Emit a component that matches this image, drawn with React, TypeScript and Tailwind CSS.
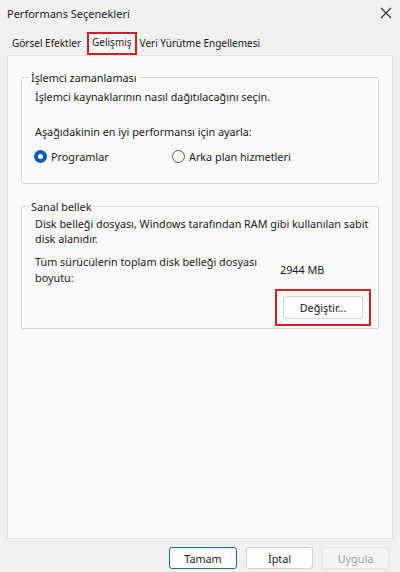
import React from "react";

const font = { fontFamily: '"Noto Sans", "Open Sans", sans-serif' };

const Radio = ({ checked, label }: { checked?: boolean; label: string }) => (
  <div className="flex items-center gap-[4px]">
    {checked ? (
      <span className="w-[13px] h-[13px] rounded-full bg-[#0a5bb5] flex items-center justify-center">
        <span className="w-[5px] h-[5px] rounded-full bg-white" />
      </span>
    ) : (
      <span className="w-[13px] h-[13px] rounded-full border border-[#5c5c5c] bg-[#f7f7f7]" />
    )}
    <span>{label}</span>
  </div>
);

const Group = ({ title, children }: { title: string; children: React.ReactNode }) => (
  <fieldset className="border border-[#dcdcdc] rounded-[2px] mx-[13px] pl-[12px] pr-[5px]">
    <legend className="px-[2px] ml-[-5px] text-[#1a1a1a]">{title}</legend>
    {children}
  </fieldset>
);

export default function App() {
  return (
    <div
      className="w-[400px] h-[572px] bg-[#f0f0f0] text-[10.8px] leading-[15px] text-[#1a1a1a] flex flex-col overflow-hidden"
      style={font}
    >
      <div className="flex items-center justify-between h-[26px] pl-[7px] pr-[8px]">
        <span className="text-[11px]">Performans Seçenekleri</span>
        <svg width="12" height="12" viewBox="0 0 12 12" className="text-[#333]">
          <path d="M1 1L11 11M11 1L1 11" stroke="currentColor" strokeWidth="1.1" />
        </svg>
      </div>

      <div className="flex items-end h-[29px] pl-[12px] text-[10px]">
        <span className="pb-[4px] pr-[5px]">Görsel Efektler</span>
        <span className="h-[23px] px-[3px] ml-[1px] border-2 border-[#d11f2a] bg-[#f9f9f9] flex items-center pb-[2px]">
          Gelişmiş
        </span>
        <span className="pb-[4px] pl-[3px]">Veri Yürütme Engellemesi</span>
      </div>

      <div className="mx-[7px] h-[484px] border border-[#e2e2e2] bg-[#f9f9f9] pt-[14px] flex flex-col gap-[15px]">
        <Group title="İşlemci zamanlaması">
          <div className="pl-[1px] pt-[4px]">İşlemci kaynaklarının nasıl dağıtılacağını seçin.</div>
          <div className="pl-[1px] pt-[20px]">Aşağıdakinin en iyi performansı için ayarla:</div>
          <div className="flex pt-[10px] pb-[19px]">
            <div className="w-[138px]">
              <Radio checked label="Programlar" />
            </div>
            <Radio label="Arka plan hizmetleri" />
          </div>
        </Group>

        <Group title="Sanal bellek">
          <div className="pl-[1px] pt-[2px]">
            Disk belleği dosyası, Windows tarafından RAM gibi kullanılan sabit disk alanıdır.
          </div>
          <div className="flex items-center pl-[1px] pt-[8px] leading-[16px]">
            <div className="w-[245px]">
              Tüm sürücülerin toplam disk belleği dosyası
              <br />
              boyutu:
            </div>
            <span>2944 MB</span>
          </div>
          <div className="flex justify-end pr-[2px] pt-[3px] pb-[2px]">
            <div className="border-2 border-[#d11f2a] px-[6px] py-[5px]">
              <button className="w-[80px] h-[23px] bg-[#fdfdfd] border border-[#d4d4d4] rounded-[3px] text-[10.8px]">
                Değiştir...
              </button>
            </div>
          </div>
        </Group>
      </div>

      <div className="flex justify-end gap-[9px] pr-[11px] pt-[8px]">
        <button className="w-[68px] h-[22px] bg-[#fdfdfd] border border-[#1f6d8c] rounded-[3px]">
          Tamam
        </button>
        <button className="w-[67px] h-[22px] bg-[#fdfdfd] border border-[#d4d4d4] rounded-[3px]">
          İptal
        </button>
        <button className="w-[67px] h-[22px] bg-[#f5f5f5] border border-[#e6e6e6] rounded-[3px] text-[#a0a0a0]">
          Uygula
        </button>
      </div>
    </div>
  );
}
